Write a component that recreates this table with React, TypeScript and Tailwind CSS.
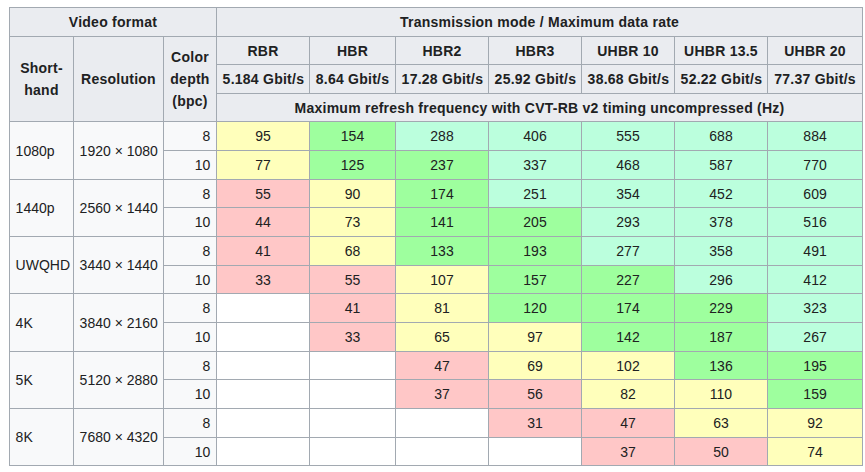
type Tone = 'Y' | 'G' | 'M' | 'R' | 'W'

const tone: Record<Tone, string> = {
  Y: 'bg-[#ffffbb]',
  G: 'bg-[#9eff9e]',
  M: 'bg-[#bbffdd]',
  R: 'bg-[#ffc7c7]',
  W: 'bg-white',
}

const modes = [
  ['RBR', '5.184 Gbit/s'],
  ['HBR', '8.64 Gbit/s'],
  ['HBR2', '17.28 Gbit/s'],
  ['HBR3', '25.92 Gbit/s'],
  ['UHBR 10', '38.68 Gbit/s'],
  ['UHBR 13.5', '52.22 Gbit/s'],
  ['UHBR 20', '77.37 Gbit/s'],
]

// each cell: value + tone; empty string means no value
const formats: { name: string; res: string; rows: [string, Tone][][] }[] = [
  {
    name: '1080p',
    res: '1920 × 1080',
    rows: [
      [['95', 'Y'], ['154', 'G'], ['288', 'M'], ['406', 'M'], ['555', 'M'], ['688', 'M'], ['884', 'M']],
      [['77', 'Y'], ['125', 'G'], ['237', 'G'], ['337', 'M'], ['468', 'M'], ['587', 'M'], ['770', 'M']],
    ],
  },
  {
    name: '1440p',
    res: '2560 × 1440',
    rows: [
      [['55', 'R'], ['90', 'Y'], ['174', 'G'], ['251', 'M'], ['354', 'M'], ['452', 'M'], ['609', 'M']],
      [['44', 'R'], ['73', 'Y'], ['141', 'G'], ['205', 'G'], ['293', 'M'], ['378', 'M'], ['516', 'M']],
    ],
  },
  {
    name: 'UWQHD',
    res: '3440 × 1440',
    rows: [
      [['41', 'R'], ['68', 'Y'], ['133', 'G'], ['193', 'G'], ['277', 'M'], ['358', 'M'], ['491', 'M']],
      [['33', 'R'], ['55', 'R'], ['107', 'Y'], ['157', 'G'], ['227', 'G'], ['296', 'M'], ['412', 'M']],
    ],
  },
  {
    name: '4K',
    res: '3840 × 2160',
    rows: [
      [['', 'W'], ['41', 'R'], ['81', 'Y'], ['120', 'G'], ['174', 'G'], ['229', 'G'], ['323', 'M']],
      [['', 'W'], ['33', 'R'], ['65', 'Y'], ['97', 'Y'], ['142', 'G'], ['187', 'G'], ['267', 'M']],
    ],
  },
  {
    name: '5K',
    res: '5120 × 2880',
    rows: [
      [['', 'W'], ['', 'W'], ['47', 'R'], ['69', 'Y'], ['102', 'Y'], ['136', 'G'], ['195', 'G']],
      [['', 'W'], ['', 'W'], ['37', 'R'], ['56', 'R'], ['82', 'Y'], ['110', 'Y'], ['159', 'G']],
    ],
  },
  {
    name: '8K',
    res: '7680 × 4320',
    rows: [
      [['', 'W'], ['', 'W'], ['', 'W'], ['31', 'R'], ['47', 'R'], ['63', 'Y'], ['92', 'Y']],
      [['', 'W'], ['', 'W'], ['', 'W'], ['', 'W'], ['37', 'R'], ['50', 'R'], ['74', 'Y']],
    ],
  },
]

const cell = 'border border-[#a2a9b1] px-[5.6px] py-[2px]'
const th = `${cell} bg-[#eaecf0] font-bold text-center tracking-[0.25px]`

export default function App() {
  return (
    <div
      className="min-h-screen bg-white pt-[7px] pl-[9px] text-[14px] leading-[22px] text-[#202122]"
      style={{ fontFamily: '"Liberation Sans", Arial, sans-serif' }}
    >
      <table className="table-fixed border-collapse w-[854px] bg-[#f8f9fa]">
        <colgroup>
          <col className="w-[64px]" />
          <col className="w-[90px]" />
          <col className="w-[53px]" />
          <col className="w-[93px]" />
          <col className="w-[86px]" />
          <col className="w-[93px]" />
          <col className="w-[93px]" />
          <col className="w-[93px]" />
          <col className="w-[93px]" />
          <col className="w-[95px]" />
        </colgroup>
        <thead>
          <tr className="h-[29px]">
            <th colSpan={3} className={th}>Video format</th>
            <th colSpan={7} className={th}>Transmission mode / Maximum data rate</th>
          </tr>
          <tr className="h-[28px]">
            <th rowSpan={3} className={th}>Short-hand</th>
            <th rowSpan={3} className={th}>Resolution</th>
            <th rowSpan={3} className={th}>Color depth (bpc)</th>
            {modes.map(([m]) => (
              <th key={m} className={th}>{m}</th>
            ))}
          </tr>
          <tr className="h-[29px]">
            {modes.map(([m, rate]) => (
              <th key={m} className={`${th} whitespace-nowrap`}>{rate}</th>
            ))}
          </tr>
          <tr className="h-[28px]">
            <th colSpan={7} className={th}>
              Maximum refresh frequency with CVT-RB v2 timing uncompressed (Hz)
            </th>
          </tr>
        </thead>
        <tbody>
          {formats.map((f, fi) =>
            f.rows.map((row, ri) => {
              const idx = fi * 2 + ri
              const h = idx % 3 === 2 ? 'h-[28px]' : 'h-[29px]'
              return (
                <tr key={`${f.name}-${ri}`} className={h}>
                  {ri === 0 && (
                    <>
                      <td rowSpan={2} className={cell}>{f.name}</td>
                      <td rowSpan={2} className={`${cell} whitespace-nowrap`}>{f.res}</td>
                    </>
                  )}
                  <td className={`${cell} text-right`}>{ri === 0 ? '8' : '10'}</td>
                  {row.map(([v, t], ci) => (
                    <td key={ci} className={`${cell} text-center ${tone[t]}`}>{v}</td>
                  ))}
                </tr>
              )
            })
          )}
        </tbody>
      </table>
    </div>
  )
}
